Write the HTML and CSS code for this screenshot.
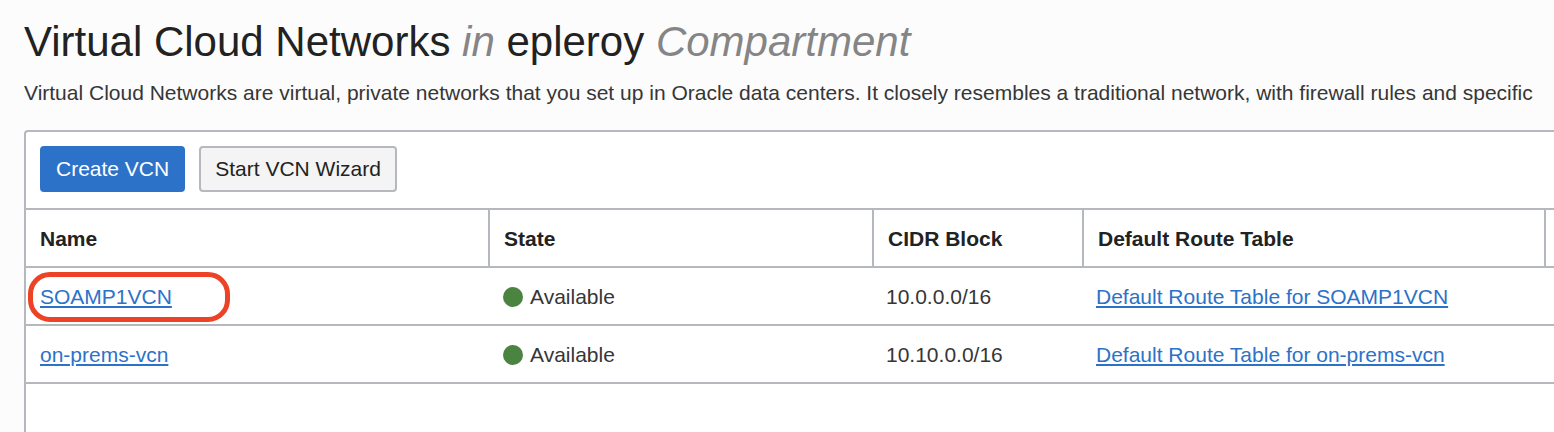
FILE: index.html
```html
<!DOCTYPE html>
<html lang="en">
<head>
<meta charset="utf-8">
<title>Virtual Cloud Networks</title>
<link rel="stylesheet" href="styles.css">
</head>
<body>
<main class="page">
<h1 class="title">Virtual Cloud Networks <em>in</em> epleroy <em>Compartment</em></h1>
<p class="intro">Virtual Cloud Networks are virtual, private networks that you set up in Oracle data centers. It closely resembles a traditional network, with firewall rules and specific</p>
<section class="panel">
<div class="toolbar">
<button class="btn btn-primary" type="button">Create VCN</button>
<button class="btn" type="button">Start VCN Wizard</button>
</div>
<table class="grid">
<colgroup><col class="c-name"><col class="c-state"><col class="c-cidr"><col class="c-route"><col></colgroup>
<thead><tr><th>Name</th><th>State</th><th>CIDR Block</th><th>Default Route Table</th><th></th></tr></thead>
<tbody>
<tr><td><span class="marked"><a href="#">SOAMP1VCN</a></span></td><td><span class="dot"></span>Available</td><td>10.0.0.0/16</td><td><a href="#">Default Route Table for SOAMP1VCN</a></td><td></td></tr>
<tr><td><a href="#">on-prems-vcn</a></td><td><span class="dot"></span>Available</td><td>10.10.0.0/16</td><td><a href="#">Default Route Table for on-prems-vcn</a></td><td></td></tr>
</tbody>
</table>
</section>
</main>
</body>
</html>
```
FILE: styles.css
```css
*, *::after { box-sizing: border-box; }
body { margin: 0; background: #fcfcfc; color: #222; font: 21px/26px "Liberation Sans", Arial, sans-serif; }
.page { display: flex; flex-direction: column; min-height: 100vh; padding: 16px 0 0 24px; }
.title { margin: 0; font-size: 42px; line-height: 52px; font-weight: 400; }
.title em { color: #858585; }
.intro { margin: 12px 0 24px; color: #363636; }
.panel { flex: 1; background: #fff; border: 2px solid #b5b9be; border-width: 2px 0 0 2px; border-radius: 4px 0 0 0; }
.toolbar { display: flex; gap: 14px; padding: 14px 14px 16px; }
.btn { height: 46px; padding: 0 14px; border: 2px solid #b5b9be; border-radius: 4px; background: #f4f4f4; color: #222; font: inherit; }
.btn-primary { background: #2c72c8; border-color: #2c72c8; color: #fff; }
.grid { width: 100%; table-layout: fixed; border-collapse: separate; border-spacing: 0; }
.c-name { width: 464px; }
.c-state { width: 384px; }
.c-cidr { width: 210px; }
.c-route { width: 462px; }
th, td { height: 58px; padding: 2px 12px 0; text-align: left; white-space: nowrap; border-bottom: 2px solid #b5b9be; }
td { color: #363636; }
th { padding-left: 14px; border-top: 2px solid #b5b9be; border-right: 2px solid #b5b9be; height: 60px; }
td:first-child { padding-left: 14px; }
th:last-child { padding: 0; border-right: 0; }
td:last-child { padding: 0; }
a { color: #2c72c8; text-decoration-thickness: 2px; text-underline-offset: 2px; }
.dot { display: inline-block; width: 20px; height: 20px; margin: 0 7px 0 1px; border-radius: 50%; background: #4b8340; vertical-align: -3px; }
.marked { position: relative; }
.marked::after { content: ""; position: absolute; left: -12px; top: -13px; width: 202px; height: 50px; border: 5px solid #ec4327; border-radius: 22px; pointer-events: none; }
```
